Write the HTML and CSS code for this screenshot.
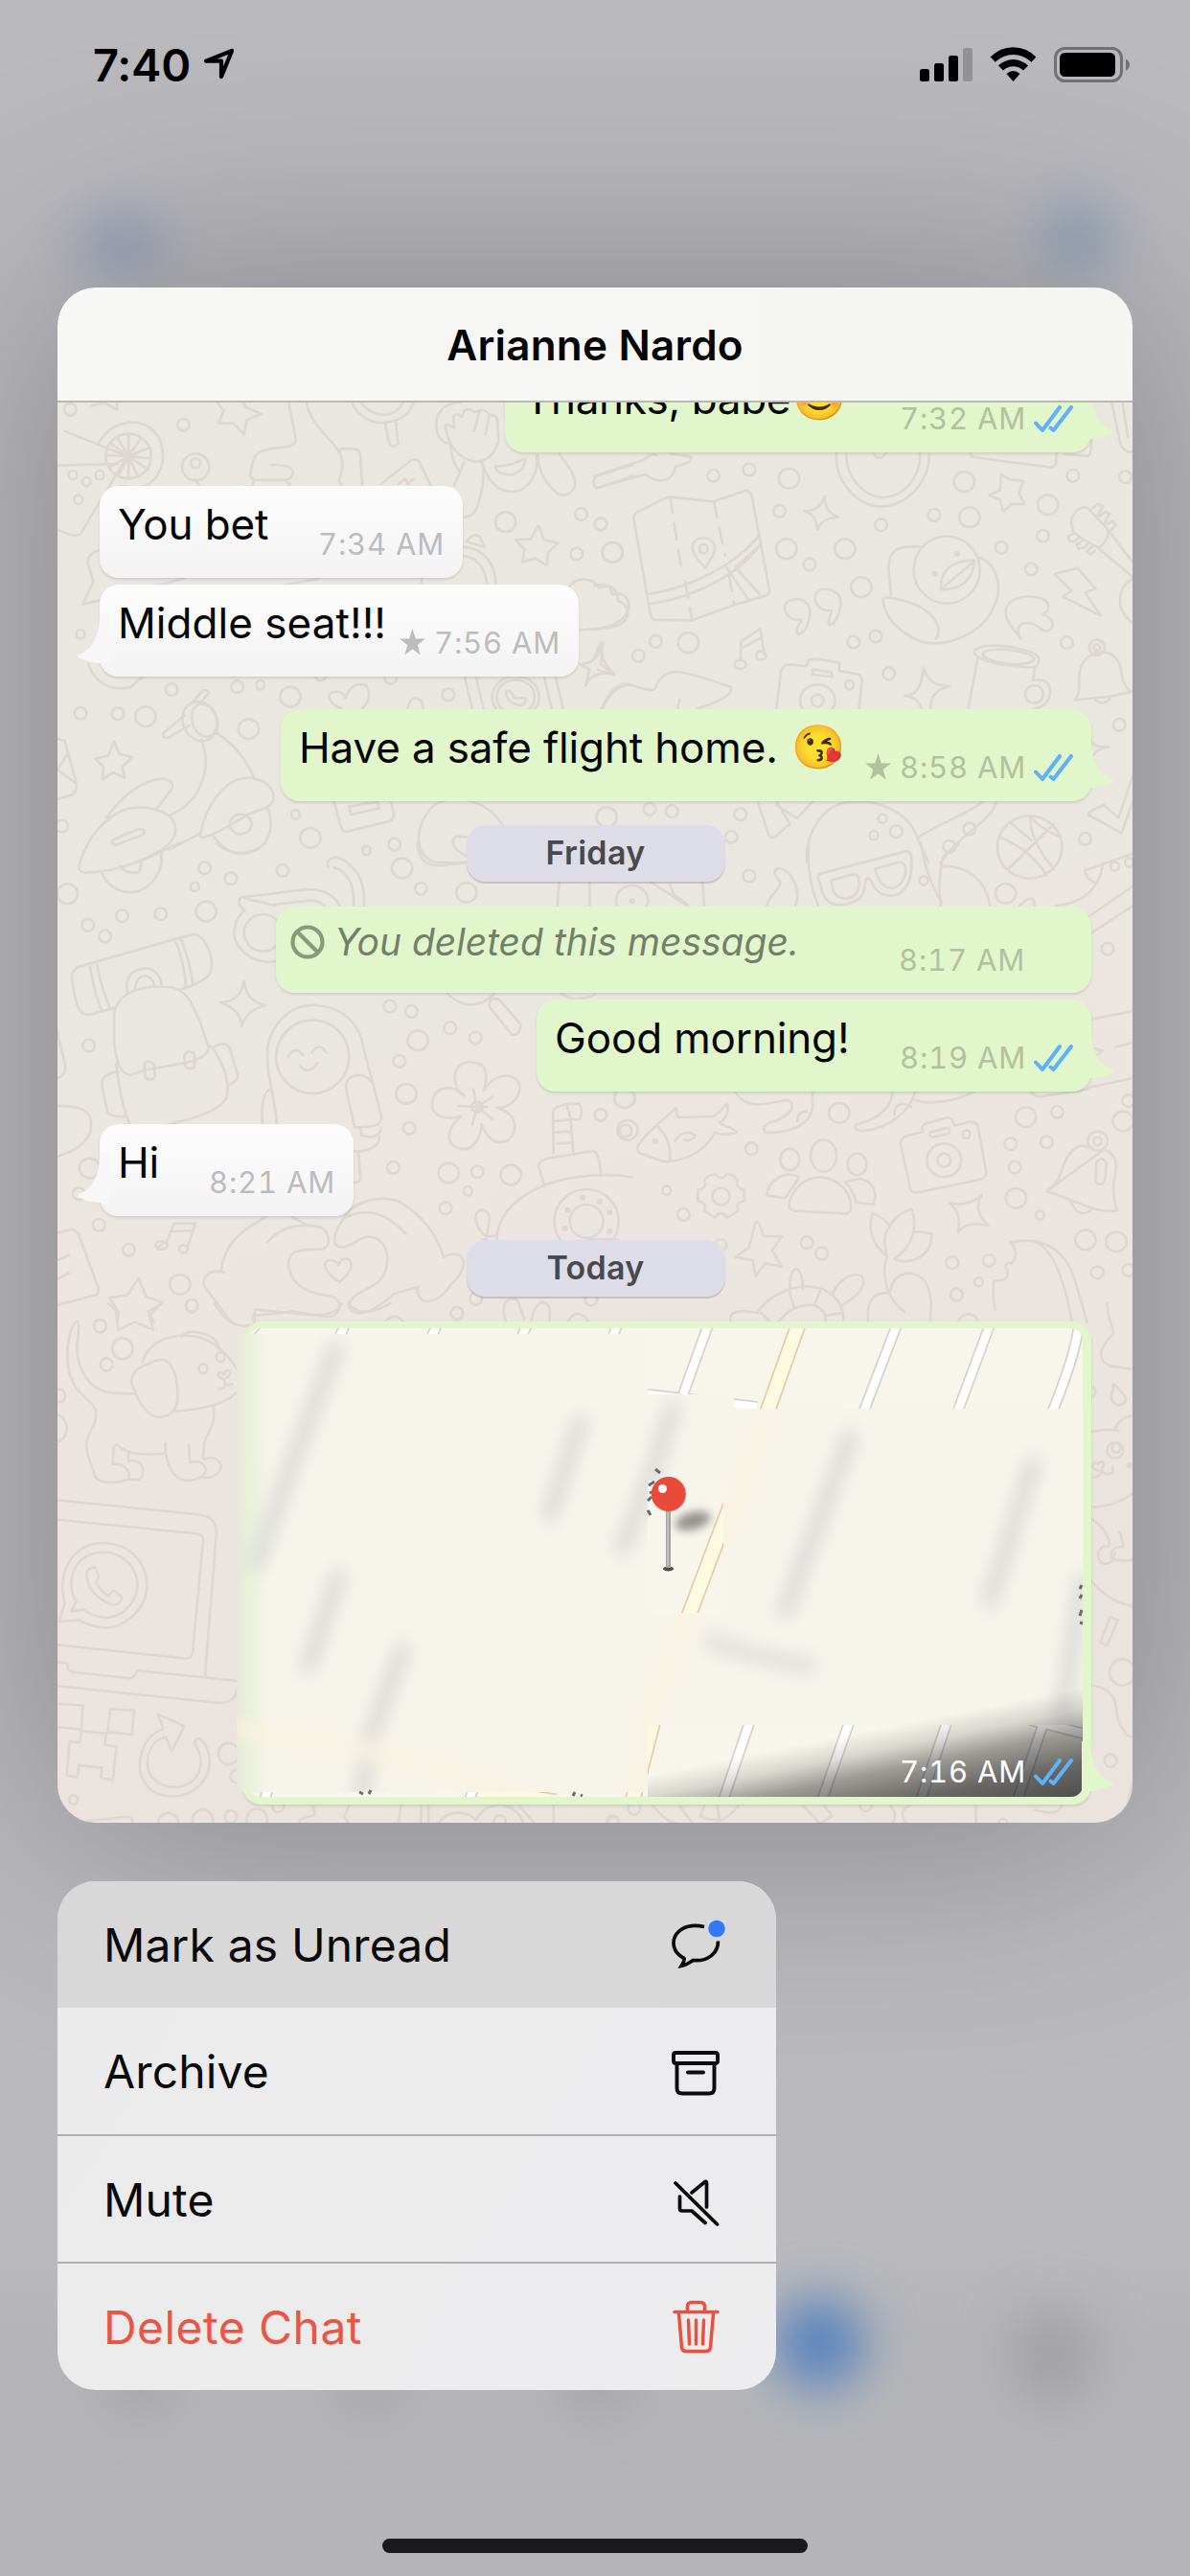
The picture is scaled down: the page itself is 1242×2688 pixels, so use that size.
FILE: index.html
```
<!DOCTYPE html>
<html lang="en">
<head>
<meta charset="utf-8">
<title>Chats</title>
<link rel="stylesheet" href="styles.css">
</head>
<body>
<svg class="defs" width="0" height="0" aria-hidden="true">
  <symbol id="read" viewBox="0 0 41 28"><path d="M2 18.5 9 26 27 2M17.5 23.5 20.500 26 39 2" fill="none" stroke="#5fb1fb" stroke-width="4" stroke-linecap="round" stroke-linejoin="round"/></symbol>
  <symbol id="star" viewBox="0 0 27 28"><path d="M13.500 0 16.800 10.400H27L18.700 17 21.700 27.500 13.500 21.200 5.300 27.500 8.300 17 0 10.400H10.200Z" fill="currentColor"/></symbol>
  <symbol id="tail" viewBox="0 0 34 54"><path d="M0 2H10C10 27 18 40 31.500 45Q34.500 47 31.500 48.500 20 53.500 9 54L0 54Z" fill="currentColor"/></symbol>
</svg>

<div class="screen">
  <div class="glow glow-edit"></div>
  <div class="glow glow-compose"></div>
  <div class="glow glow-tab1"></div>
  <div class="glow glow-tab2"></div>
  <div class="glow glow-tab3"></div>
  <div class="glow glow-tab4"></div>
  <div class="glow glow-tab5"></div>

  <header class="status">
    <div class="clock">
      <span class="time">7:40</span>
      <svg class="locate" width="36" height="36" viewBox="0 0 36 36"><path d="M31 5 20 32V15.700H4Z" fill="none" stroke="#000" stroke-width="4.200" stroke-linejoin="round"/></svg>
    </div>
    <svg class="system" width="222" height="40" viewBox="956 48 222 40">
      <rect x="958" y="72" width="10" height="13" rx="2.500"/><rect x="973" y="66" width="10" height="19" rx="2.500"/><rect x="988" y="58" width="10" height="27" rx="2.500"/><rect x="1003" y="50" width="10" height="35" rx="2.500" fill="#929294"/>
      <path d="M1031.700 59.500Q1042 49.300 1055.500 49.300T1079.400 59.500L1074.500 64.700Q1066 57 1055.500 57T1036.700 64.700ZM1040 68.500Q1047 62 1055.500 62T1071 68.500L1066 73.500Q1061 69.300 1055.500 69.300T1045 73.500ZM1048.500 77Q1052 74 1055.500 74T1062.500 77L1055.500 85Z"/>
      <rect x="1099.500" y="50.500" width="69" height="34" rx="10" fill="none" stroke="#717173" stroke-width="3"/><rect x="1104" y="55" width="58" height="25" rx="5.500"/><path d="M1173 61.500Q1177 64 1177 67.500T1173 74Z" fill="#717173"/>
    </svg>
  </header>

  <main class="preview">
    <h1 class="title">Arianne Nardo</h1>
    <section class="chat">
      <svg class="wallpaper" viewBox="60 420 1122 1482" aria-hidden="true">
        <g transform="translate(40 400) scale(.39541 .33333)">
          <path d="M70 150 235 228 112 470Q100 485 50 458M52 257 210 252M158 190C190 120 260 100 305 150C345 200 335 300 275 325Q240 330 215 320M238 228 238 165M238 228 272 170M238 228 295 200M238 228 297 235M238 228 290 270M238 228 262 290M238 228 238 298M238 228 210 290M238 228 190 262M238 228 184 225M238 228 192 190M238 228 208 170"/><ellipse cx="238" cy="228" rx="60" ry="70"/>
          <path d="M140 70 175 60 208 84 208 58M472 60 490 85 475 125 515 125 543 160 550 115 588 95 548 75 535 45M660 60 680 175Q680 195 650 200C600 205 575 210 568 240L558 290 570 303H650Q672 300 672 275 668 255 615 255M708 60C715 120 760 160 785 200 810 235 805 270 793 305L800 318M793 215 800 205 835 205Q850 210 850 225L855 318M570 303 565 318M650 303 665 318M828 60C840 100 880 130 920 122 960 115 985 90 990 60M852 60C870 90 890 98 915 98 940 95 955 80 962 60M915 122 927 190Q935 205 950 190L943 118M905 315 985 240Q1000 235 1005 245L1035 318M950 315 970 298 975 315 990 300M413 300 425 318"/>
          <path d="M1115 60C1060 60 1040 110 1055 160Q1065 185 1085 190M1075 140C1070 120 1090 135 1098 140L1095 105Q1105 90 1118 105L1125 85Q1140 75 1150 90L1165 85Q1180 80 1190 100 1210 95 1212 120L1215 180Q1200 240 1160 245C1110 240 1085 200 1075 140ZM1165 85 1150 150M1190 100 1180 160M1088 190C1090 240 1100 260 1112 275M1125 245 1098 318M1170 245C1180 280 1172 340 1160 380Q1150 420 1125 418M1175 260C1190 320 1230 350 1270 335 1300 320 1320 280 1315 225M1205 260Q1245 260 1285 235 1285 275 1250 285 1215 290 1205 260M1318 225C1320 280 1345 320 1370 345Q1400 360 1415 325C1425 290 1390 250 1375 220M1568 255 1475 290Q1455 310 1475 328L1568 290"/>
          <ellipse cx="415" cy="262" rx="36" ry="42"/><ellipse cx="415" cy="250" rx="12" ry="15"/>
          <path d="M1320 445 1335 490 1372 500 1345 530 1342 570 1312 548 1278 560 1283 520 1260 490 1300 487ZM1010 628C1015 560 1070 510 1125 512 1180 520 1208 570 1207 630M1120 540Q1175 545 1185 630M1130 495Q1150 465 1165 480L1178 512ZM1400 640C1420 600 1465 610 1480 640 1520 620 1530 660 1530 680 1570 700 1565 750 1510 765L1430 772M160 522Q130 535 130 560L145 620 118 692 215 665 385 610M560 650 740 612M1490 812Q1475 880 1430 880L1455 895 1445 945Q1460 900 1520 910L1485 880Z"/>
          <path d="M132 878C145 930 190 970 245 950L275 918M385 1040 330 1095Q325 1115 345 1108L400 1070M405 1000 435 960Q450 960 450 970L425 1003"/><ellipse cx="427" cy="1058" rx="46" ry="62" transform="rotate(-12 427 1058)"/><ellipse cx="438" cy="1055" rx="32" ry="52" transform="rotate(-12 438 1055)"/>
          <path d="M430 1115C460 1200 430 1310 350 1350M470 1095C520 1130 550 1180 570 1235M180 1360C215 1300 270 1240 330 1238Q360 1245 352 1270L310 1335M110 1500C130 1420 180 1350 240 1330 310 1320 365 1350 362 1400 358 1450 310 1470 260 1500M195 1430 265 1395Q285 1395 278 1412L205 1445Q190 1440 195 1430ZM428 1410C440 1330 490 1230 560 1235 630 1250 635 1310 600 1330 540 1345 500 1400 440 1420Q425 1425 428 1410M460 1412C480 1450 510 1478 545 1472 610 1460 625 1390 605 1328M345 1460 425 1410M325 1470V1500"/><ellipse cx="534" cy="1380" rx="29" ry="31"/>
          <path d="M200 1120 213 1160 248 1170 222 1200 228 1235 198 1218 170 1240 172 1200 150 1175 185 1165ZM50 1112 70 1120 100 1250Q105 1280 85 1290L50 1302M50 1210 80 1155M50 1210 98 1250M800 1018C760 1000 760 965 785 965Q805 965 810 985 830 930 865 945 885 980 855 1018M975 1018Q980 985 995 985 1018 990 1015 1018M1125 918 1145 1018M1155 918 1175 1018M1335 918 1355 1018M1365 918 1385 1018M1235 965Q1250 955 1255 985L1285 985Q1290 1005 1270 1008 1235 1000 1235 965M780 1308 800 1395Q810 1408 825 1400L930 1370Q940 1360 938 1345L930 1308M820 1325 895 1310 900 1330 825 1350ZM1490 1018C1510 960 1540 940 1568 945M1130 1500 1050 1500C990 1480 990 1390 1040 1325 1090 1280 1180 1300 1225 1382M1130 1480C1095 1460 1085 1430 1105 1418L1130 1420"/><ellipse cx="1260" cy="982" rx="62" ry="66"/><ellipse cx="1260" cy="982" rx="50" ry="54"/>
          <ellipse class="m" cx="84" cy="82"/><ellipse class="m" cx="383" cy="130"/><ellipse class="s" cx="91" cy="287"/><ellipse class="s" cx="162" cy="287"/><ellipse class="s" cx="127" cy="308"/><ellipse class="s" cx="106" cy="364"/><ellipse class="l" cx="1233" cy="434"/><ellipse class="m" cx="1433" cy="410"/><ellipse class="m" cx="1484" cy="441"/><ellipse class="m" cx="1421" cy="534"/><ellipse class="l" cx="1515" cy="529"/><ellipse class="s" cx="111" cy="785"/><ellipse class="m" cx="352" cy="959"/><ellipse class="m" cx="525" cy="950"/><ellipse class="s" cx="586" cy="944"/><ellipse class="l" cx="665" cy="981"/><ellipse class="m" cx="1082" cy="975"/><ellipse class="m" cx="111" cy="1033"/><ellipse class="m" cx="210" cy="1034"/><ellipse class="l" cx="283" cy="1043"/><ellipse class="l" cx="555" cy="1082"/><ellipse class="s" cx="679" cy="1349"/><ellipse class="l" cx="718" cy="1423"/><ellipse class="s" cx="866" cy="1463"/><ellipse class="m" cx="940" cy="1443"/><ellipse class="l" cx="1500" cy="1358"/><ellipse class="m" cx="62" cy="1386"/><ellipse class="m" cx="930" cy="922"/><ellipse class="m" cx="745" cy="912"/>
        </g>
        <g transform="translate(620 400) scale(.39668 .33333)">
          <path d="M0 290 130 240Q150 218 165 225M5 328 135 285Q175 320 205 290L215 260Q260 250 255 230L200 220M990 218 992 230 1200 263Q1212 262 1215 250L1217 218M1240 222 1300 228Q1310 222 1308 170M1362 60 1385 190Q1395 220 1417 213M1390 60 1405 170M638 218C630 300 690 388 760 386 830 380 885 300 882 218M664 218C660 290 710 357 760 357 820 355 860 290 857 218M735 218Q750 250 768 218"/>
          <path d="M120 400 195 355 315 370 400 335Q412 340 415 352L462 650Q460 662 450 665L365 695 258 742 160 740Q150 735 148 720L104 420Q105 405 120 400ZM142 660C260 640 380 560 435 475M150 690C270 670 390 590 437 505M345 570 405 675M372 575 435 660M372 575 437 508"/><path d="M200 355 232 600M240 620 258 742M315 370 345 540M355 600 368 690" stroke-dasharray="17 11"/><path d="M293 578C270 550 257 530 259 510 265 475 310 475 318 510 320 535 305 550 293 578Z"/><ellipse cx="288" cy="518" rx="11" ry="14"/>
          <path d="M607 352Q605 400 642 420 600 420 588 458 585 410 553 400 595 400 607 352ZM1072 285 1095 302 1130 305 1118 345 1132 378 1098 378 1077 402 1068 365 1040 350 1068 335ZM865 513C800 505 775 520 775 580L782 670M1010 545C1060 560 1075 640 1055 690 1030 780 930 830 860 808 800 780 765 730 760 680 760 660 800 675 840 690 890 715 920 760 900 800M912 645C910 590 940 550 1000 555 1000 610 965 650 912 645ZM912 645 1000 557M1212 597 1272 578 1320 643 1292 655 1333 727 1233 667 1257 650ZM1123 800C1105 770 1070 730 1088 695 1110 655 1180 665 1192 685 1200 710 1190 720 1180 722 1220 740 1208 775 1190 775 1170 775 1170 750 1140 750 1115 752 1110 770 1123 800ZM537 787C525 765 545 755 545 740 500 745 490 690 515 680 560 665 575 700 565 740 560 770 550 780 537 787ZM620 757C610 740 625 725 625 712 575 715 570 650 600 645 640 640 655 670 647 705 640 740 630 755 620 757Z"/><ellipse cx="928" cy="584" rx="87" ry="105"/>
          <path d="M1255 430C1260 400 1285 380 1300 392L1350 455Q1360 480 1330 515 1300 500 1260 465ZM1350 455 1417 560M1325 515 1417 605M1417 612C1375 640 1370 710 1417 750M1308 395 1325 378 1340 385 1325 412M1330 415 1345 402 1357 408 1342 438M1350 440 1365 430 1372 445 1358 462M1262 470 1247 480 1252 495 1265 495 1275 482M1285 492 1270 505 1275 518 1290 515 1298 502M1310 512 1297 525 1305 535 1318 525"/>
          <path d="M0 632Q45 620 47 660 90 650 92 700 80 760 0 770M0 860 18 812Q15 870 52 910 20 905 10 895M20 1018C40 960 70 930 100 945 160 970 160 960 165 940C200 880 230 900 360 950 370 980 300 1010 270 1018M225 990 220 1018M385 870 387 808 437 768 448 850M387 830 437 798M480 1018 492 900Q500 880 515 880L555 885Q565 880 565 865 590 860 645 875V900L690 910Q705 915 705 930L697 1018M575 895 625 905 627 918 575 912ZM867 890Q880 950 937 948 885 960 885 1018M867 890Q860 980 818 978 855 985 862 1018M1000 840C1020 800 1160 830 1170 860 1170 900 1150 890 1110 885 1050 880 1000 860 1000 840ZM1010 855 985 1018M1160 890 1155 930Q1200 920 1200 970 1195 1010 1160 1018M1265 992C1285 960 1270 930 1280 890 1300 830 1370 820 1385 890 1390 930 1400 960 1415 965L1360 980ZM1320 992Q1340 1015 1360 983"/><ellipse cx="1090" cy="856" rx="68" ry="22" transform="rotate(7 1090 856)"/><ellipse cx="385" cy="880" rx="15" ry="14"/><ellipse cx="440" cy="852" rx="13" ry="14"/><ellipse cx="588" cy="993" rx="46" ry="50"/><ellipse class="m" cx="588" cy="993"/><ellipse cx="1158" cy="973" rx="24" ry="28"/><ellipse cx="1323" cy="827" rx="20" ry="25"/><ellipse cx="1323" cy="827" rx="8" ry="10"/>
          <path d="M430 1308 460 1415Q470 1430 480 1415L515 1380 480 1308M480 1320 535 1362 575 1308M560 1500C555 1420 590 1340 650 1315 750 1290 830 1350 850 1420L880 1500M855 1420C920 1370 980 1350 1025 1308M912 1500C960 1410 1050 1370 1058 1308M1340 1320 1305 1340 1300 1350 1388 1408 1417 1310M1340 1320 1380 1360 1417 1230M1305 1115Q1310 1140 1355 1138 1315 1145 1310 1175"/><ellipse cx="1146" cy="1452" rx="85" ry="98"/><path d="M1146 1355Q1180 1400 1228 1420M1146 1355Q1150 1440 1210 1520M1095 1375 1150 1430M1210 1380 1090 1520M1065 1420Q1150 1460 1190 1540"/>
          <ellipse class="m" cx="314" cy="289"/><ellipse class="m" cx="408" cy="270"/><ellipse class="l" cx="513" cy="298"/><ellipse class="m" cx="18" cy="441"/><ellipse class="l" cx="49" cy="529"/><ellipse class="m" cx="488" cy="400"/><ellipse class="l" cx="506" cy="518"/><ellipse class="m" cx="567" cy="567"/><ellipse class="l" cx="660" cy="518"/><ellipse class="l" cx="703" cy="638"/><ellipse class="m" cx="755" cy="443"/><ellipse class="l" cx="974" cy="308"/><ellipse class="m" cx="895" cy="412"/><ellipse class="l" cx="988" cy="419"/><ellipse class="l" cx="1194" cy="380"/><ellipse class="m" cx="1260" cy="289"/><ellipse class="m" cx="1398" cy="293"/><ellipse class="m" cx="1181" cy="478"/><ellipse class="m" cx="1072" cy="514"/><ellipse class="m" cx="1150" cy="582"/><ellipse class="m" cx="117" cy="853"/><ellipse class="m" cx="162" cy="808"/><ellipse class="l" cx="248" cy="812"/><ellipse class="m" cx="683" cy="810"/><ellipse class="m" cx="741" cy="792"/><ellipse class="m" cx="776" cy="909"/><ellipse class="m" cx="1244" cy="812"/><ellipse class="m" cx="1382" cy="1069"/><ellipse class="l" cx="33" cy="1358"/><ellipse class="m" cx="146" cy="1333"/><ellipse class="m" cx="205" cy="1340"/><ellipse class="m" cx="385" cy="1349"/><ellipse class="m" cx="361" cy="1420"/><ellipse class="s" cx="759" cy="1363"/><ellipse class="m" cx="795" cy="1403"/><ellipse class="s" cx="736" cy="1415"/><ellipse class="m" cx="1292" cy="1426"/><ellipse class="s" cx="672" cy="944"/><ellipse class="m" cx="988" cy="1395"/><ellipse class="m" cx="935" cy="1450"/><ellipse class="dot" cx="955" cy="533"/><ellipse class="dot" cx="897" cy="596"/>
        </g>
        <g transform="translate(40 880) scale(.39541 .33333)">
          <path d="M110 60Q100 90 125 92C220 90 300 40 370 0M168 92C180 130 210 155 250 153 300 145 335 80 322 30M215 70Q235 100 265 90 275 70 270 60M470 0Q530 60 600 0M1000 0C1005 50 1020 70 1060 70L1130 60M765 75C755 45 785 35 810 55 850 90 862 130 860 195M780 75C820 90 835 130 832 195M625 370C560 380 510 320 518 270 520 240 530 225 545 210 520 190 530 165 545 168L700 145C750 140 780 160 795 195M545 172 625 195M620 192 720 178Q740 180 755 195"/><ellipse cx="593" cy="280" rx="50" ry="58"/>
          <path d="M110 385 400 287Q425 280 440 310 465 360 455 400 450 430 375 458M110 385C80 400 90 430 95 470 105 530 115 540 140 535L200 515M137 385Q145 460 168 525M155 380Q165 450 190 517M360 300Q385 370 390 450M375 295Q400 370 408 440M235 465C225 400 270 385 300 395Q325 415 325 445M255 455Q258 415 285 415 305 425 305 445M200 530C215 450 300 445 350 450 395 460 410 510 430 570L450 640C445 700 300 690 245 725 215 725 205 680 200 620ZM455 635C500 700 505 770 495 800 470 850 370 870 320 888L245 885C215 820 210 720 205 690M280 695Q285 675 305 690L308 730Q295 750 282 730ZM385 665Q395 640 412 660L413 700Q395 715 388 695ZM462 640Q490 615 505 640L525 720Q528 745 505 755M212 715Q165 720 168 760L182 840Q190 858 230 855"/>
          <path d="M543 430Q548 495 600 507 550 520 537 573 535 520 480 498 535 495 543 430ZM630 880C625 800 600 720 605 640 615 560 670 500 735 507 810 515 850 570 858 640L905 850Q908 880 885 885L835 890C830 850 815 800 812 760 815 720 860 715 878 745M660 668Q675 630 698 662M722 655Q742 620 760 655M690 695Q712 730 737 688M592 880Q585 780 615 768M850 890 853 915Q900 930 905 890M900 920Q900 960 835 965M845 965 850 1050Q848 1062 832 1062"/><ellipse cx="724" cy="668" rx="96" ry="115"/>
          <path d="M1110 780C1080 700 1120 680 1150 686 1180 690 1190 720 1175 775 1210 710 1260 720 1270 755 1275 800 1240 830 1210 827 1270 850 1265 900 1240 930 1200 950 1180 910 1170 880 1165 940 1140 965 1110 955 1070 940 1080 890 1115 855 1070 870 1035 850 1040 810 1050 750 1100 760 1125 790ZM1158 825 1148 770M1158 825 1200 793M1158 825 1198 862M1158 825 1145 882M1158 825 1110 822M1158 825 1185 825"/><ellipse cx="1158" cy="825" rx="14" ry="17"/>
          <path d="M1080 470Q1140 540 1205 470M1190 510Q1190 480 1215 488L1272 565Q1275 600 1250 600ZM1380 470Q1400 490 1435 485T1468 470M1360 970 1358 840Q1365 815 1425 815 1440 830 1430 862Q1420 868 1405 862L1412 965M1362 870 1405 865M1365 905 1408 902M1368 940 1412 937M1395 820 1405 860M1337 1077 1320 1010Q1325 990 1350 985L1465 963Q1482 970 1485 1040M1210 1240C1215 1120 1330 1050 1460 1040 1520 1035 1568 1045 1568 1045M1183 1232C1150 1200 1145 1150 1170 1148 1200 1150 1190 1190 1183 1232ZM1183 1232 1210 1228M1170 1240H1183M1450 1240H1530"/><ellipse cx="1447" cy="1183" rx="85" ry="100"/><ellipse cx="1447" cy="1183" rx="44" ry="52"/>
          <path d="M50 822C130 820 145 850 138 900 125 950 80 970 50 980M50 590 72 700Q70 730 50 735M315 1265 340 1245 358 1190H415L393 1265M350 1215 408 1212M50 1220 90 1208 105 1220 158 1390Q160 1410 150 1415L50 1445M50 1305 80 1290M50 1365 80 1345M265 1360 285 1420 327 1437 295 1475 305 1500M265 1360 235 1415 188 1422 212 1470 208 1500M482 1340C490 1250 540 1210 600 1170M490 1342C440 1330 430 1370 440 1390L510 1500M605 1248C640 1200 690 1190 740 1200 770 1210 775 1260 750 1270 710 1275 660 1260 660 1320 670 1400 730 1410 780 1420 805 1440 800 1490 750 1480L670 1465 575 1478Q570 1462 565 1490M670 1170 710 1195M805 1175C780 1220 770 1260 800 1265 840 1260 850 1220 890 1235 930 1260 930 1330 900 1370 870 1400 820 1410 820 1450 840 1500 900 1450 940 1410L1005 1388M805 1175C830 1120 900 1100 950 1120 1010 1160 1050 1220 1070 1295 1130 1260 1140 1330 1090 1380 1050 1450 1000 1450 1000 1390M805 1175Q890 1120 970 1222M795 1373C750 1340 745 1300 775 1305Q790 1310 792 1320 800 1295 820 1302 840 1330 795 1373ZM1235 1500C1215 1430 1245 1420 1265 1430L1283 1490M1300 1500C1310 1430 1340 1420 1350 1460V1500M1375 120 1370 195M1455 120V195"/><ellipse cx="325" cy="1258" rx="16" ry="13"/><ellipse cx="383" cy="1270" rx="12" ry="12"/>
          <ellipse class="l" cx="77" cy="158"/><ellipse class="m" cx="439" cy="77"/><ellipse class="m" cx="508" cy="110"/><ellipse class="s" cx="413" cy="136"/><ellipse class="m" cx="645" cy="85"/><ellipse class="l" cx="960" cy="78"/><ellipse class="m" cx="1010" cy="142"/><ellipse class="l" cx="1130" cy="154"/><ellipse class="m" cx="131" cy="256"/><ellipse class="m" cx="221" cy="227"/><ellipse class="m" cx="323" cy="221"/><ellipse class="l" cx="443" cy="213"/><ellipse class="m" cx="176" cy="291"/><ellipse class="m" cx="133" cy="633"/><ellipse class="m" cx="928" cy="510"/><ellipse class="m" cx="985" cy="526"/><ellipse class="m" cx="1087" cy="578"/><ellipse class="l" cx="1002" cy="617"/><ellipse class="m" cx="1154" cy="609"/><ellipse class="m" cx="953" cy="682"/><ellipse class="l" cx="971" cy="784"/><ellipse class="m" cx="979" cy="892"/><ellipse class="l" cx="1083" cy="1032"/><ellipse class="m" cx="1159" cy="1028"/><ellipse class="m" cx="937" cy="1015"/><ellipse class="l" cx="1247" cy="1038"/><ellipse class="s" cx="1134" cy="1088"/><ellipse class="m" cx="1075" cy="1142"/><ellipse class="m" cx="1484" cy="850"/><ellipse class="l" cx="1547" cy="797"/><ellipse class="m" cx="1550" cy="900"/><ellipse class="l" cx="135" cy="1017"/><ellipse class="m" cx="107" cy="1097"/><ellipse class="m" cx="160" cy="1195"/><ellipse class="m" cx="239" cy="1273"/><ellipse class="l" cx="374" cy="1381"/><ellipse class="m" cx="405" cy="1447"/><ellipse class="m" cx="1105" cy="1471"/><ellipse class="m" cx="1155" cy="1426"/><ellipse class="m" cx="1459" cy="1428"/><ellipse class="s" cx="866" cy="22"/><ellipse class="dot" cx="1437" cy="1109"/><ellipse class="dot" cx="1482" cy="1121"/><ellipse class="dot" cx="1508" cy="1155"/><ellipse class="dot" cx="1397" cy="1148"/><ellipse class="dot" cx="1390" cy="1206"/><ellipse class="dot" cx="1508" cy="1214"/>
        </g>
        <g transform="translate(620 880) scale(.39668 .33333)">
          <path d="M590 115Q585 95 605 92L820 25Q835 20 835 50 840 130 800 160 760 175 735 135 725 100 715 112L710 150C700 190 640 205 615 180 595 160 600 130 590 115ZM625 115 680 97Q700 95 697 130 695 170 660 173 625 170 625 115ZM740 80 800 60Q820 55 820 90 810 140 780 140 750 135 740 80ZM565 0C560 80 570 140 590 195M860 0C870 80 895 150 915 185M912 195C905 130 910 60 925 30Q960 10 960 0M918 72C980 70 1030 110 1042 195M530 195C545 140 520 90 490 78 470 80 470 95 490 120 490 150 460 160 455 195M285 120 290 195M150 122 245 195M200 130 210 160 245 190M1292 85 1417 32M1292 85C1290 110 1320 125 1320 125M1340 62C1330 130 1300 185 1215 195M1300 230 1417 135M1310 280 1417 195M1120 195Q1160 150 1158 195M1310 550 1417 525M1310 640 1338 650 1315 670M1370 637 1417 625M1300 765 1417 735"/>
          <path d="M115 950C130 910 190 860 215 828 220 835 215 860 225 858L310 855C330 850 335 830 350 815 355 840 350 860 330 875 350 890 375 895 375 905 350 915 330 910 318 905 290 970 230 1000 180 995L120 970Q112 960 115 950ZM168 888Q205 930 200 990M213 932Q235 890 268 915 255 935 237 928M370 778C410 850 480 800 510 805 540 820 510 860 460 875Q440 890 450 905C530 910 570 870 575 830V778M785 778C780 850 720 870 690 880 680 890 690 900 710 900 780 890 830 840 845 778M845 805Q920 825 1000 778M790 850Q790 815 815 815L835 825M535 870Q535 840 560 838M1150 778Q1160 800 1190 790L1300 770"/>
          <path d="M318 1035Q335 1060 350 1035 365 1035 378 1055 370 1080 395 1085V1120Q370 1125 380 1150L350 1172Q335 1145 318 1172L290 1150Q300 1125 273 1120V1085Q300 1080 290 1055 305 1035 318 1035ZM513 1140C515 1090 550 1045 595 1045 650 1050 680 1100 675 1150L665 1160 525 1150ZM503 1110 455 1103C455 1060 500 1020 540 1045ZM690 1125 735 1130C745 1100 740 1060 700 1050L660 1060Q680 1080 690 1125Z"/><ellipse cx="334" cy="1105" rx="23" ry="27"/><ellipse cx="604" cy="978" rx="34" ry="50"/><ellipse cx="515" cy="990" rx="25" ry="34"/><ellipse cx="692" cy="1005" rx="25" ry="34"/>
          <path d="M820 917 865 903Q858 880 880 875L930 858Q945 858 948 885L985 872Q1005 870 1010 885L1032 1030Q1030 1050 1015 1053L850 1093Q835 1095 832 1080L807 945Q805 925 820 917ZM885 905 930 890Q942 900 930 910L890 920Q880 915 885 905ZM1190 1090C1240 1050 1220 1010 1260 960 1290 930 1300 960 1300 950M1342 958C1385 980 1375 1020 1367 1060 1365 1110 1370 1130 1377 1150 1310 1160 1260 1110 1190 1090ZM1255 1125Q1275 1175 1308 1148M1322 1000Q1335 975 1348 1000L1345 1050Q1335 1080 1320 1060Z"/><ellipse cx="921" cy="992" rx="45" ry="52"/><ellipse cx="921" cy="992" rx="17" ry="21"/><ellipse cx="979" cy="911" rx="10" ry="13"/><ellipse cx="1325" cy="932" rx="26" ry="30"/><ellipse cx="1325" cy="932" rx="10" ry="13"/>
          <path d="M935 1125Q980 1140 1020 1100 995 1150 1037 1197 980 1180 957 1218 970 1160 935 1125ZM425 1185Q435 1180 445 1230L495 1230 468 1275 495 1325 450 1315 425 1355 418 1305 372 1295 408 1265ZM770 1290C730 1260 720 1200 733 1158 760 1170 775 1190 778 1200 790 1170 810 1155 835 1145 850 1190 845 1260 790 1300M770 1290C760 1240 765 1220 778 1200M843 1215Q865 1215 888 1222C890 1280 850 1320 795 1305M770 1295C755 1350 770 1430 818 1467M780 1400C790 1340 840 1330 870 1370 895 1420 885 1470 885 1500M775 1408C730 1400 715 1450 722 1500M515 1395Q515 1330 535 1332 550 1350 550 1395M628 1410C640 1370 680 1340 705 1355 720 1390 690 1420 650 1448M360 1500C350 1460 390 1460 430 1470 460 1410 540 1370 600 1395 650 1420 660 1470 655 1500M515 1405 525 1450M595 1398 580 1445M440 1470 465 1500M485 1500Q520 1440 580 1445 610 1460 610 1500M610 1478 655 1470M1095 1250C1170 1230 1230 1260 1260 1350 1280 1420 1290 1470 1297 1500M1160 1247C1210 1270 1240 1380 1258 1500M1095 1250Q1120 1280 1100 1315 1080 1310 1085 1330 1100 1370 1052 1370 1048 1420 1055 1460 1058 1500M1100 1405 1127 1415 1100 1432M1195 1380 1170 1400 1198 1410M1130 1490Q1160 1475 1195 1470M1155 1485V1500M1180 1475V1495M1355 1500C1340 1440 1350 1410 1375 1430L1417 1440M90 1420 88 1470Q90 1485 110 1485L240 1498 255 1465 288 1488 292 1420M0 1040C80 1040 160 1080 163 1160Q160 1210 150 1240M0 960Q15 985 15 1040"/>
          <ellipse cx="100" cy="180" rx="42" ry="48"/><ellipse class="dot" cx="100" cy="181"/>
          <ellipse class="m" cx="408" cy="102"/><ellipse class="s" cx="867" cy="117"/><ellipse class="l" cx="1083" cy="157"/><ellipse class="s" cx="1370" cy="72"/><ellipse class="s" cx="1408" cy="60"/><ellipse class="m" cx="1351" cy="330"/><ellipse class="l" cx="81" cy="797"/><ellipse class="m" cx="18" cy="850"/><ellipse class="l" cx="88" cy="898"/><ellipse class="l" cx="645" cy="844"/><ellipse class="m" cx="414" cy="956"/><ellipse class="s" cx="191" cy="1087"/><ellipse class="m" cx="235" cy="1162"/><ellipse class="l" cx="1136" cy="857"/><ellipse class="m" cx="1219" cy="841"/><ellipse class="m" cx="1096" cy="941"/><ellipse class="m" cx="1191" cy="935"/><ellipse class="m" cx="1107" cy="1014"/><ellipse class="l" cx="1110" cy="1111"/><ellipse class="s" cx="1173" cy="1164"/><ellipse class="l" cx="1392" cy="870"/><ellipse class="m" cx="1406" cy="806"/><ellipse class="l" cx="1293" cy="1241"/><ellipse class="l" cx="1374" cy="1247"/><ellipse class="m" cx="560" cy="1250"/><ellipse class="m" cx="599" cy="1284"/><ellipse class="m" cx="942" cy="1313"/><ellipse class="m" cx="1039" cy="1306"/><ellipse class="s" cx="1012" cy="1373"/><ellipse class="m" cx="954" cy="1413"/><ellipse class="m" cx="1324" cy="1343"/><ellipse class="m" cx="1406" cy="1336"/><ellipse class="m" cx="333" cy="1258"/><ellipse class="dot" cx="161" cy="932"/>
        </g>
        <g transform="translate(40 1360) scale(.39541 .35714)">
          <path d="M205 22 210 78 255 55 303 77 290 22 325 3M185 0 205 22M465 0C490 50 530 80 570 60L572 18 680 30Q790 45 800 0M820 0Q850 50 930 0M103 52C85 60 70 130 80 190 90 270 150 280 152 320 155 360 130 370 127 410 125 440 140 470 150 505 160 530 210 525 235 515M103 52Q110 55 102 120C100 200 140 260 200 262L255 265M290 178C250 190 240 220 250 245 270 300 290 335 325 332 370 325 370 280 367 245 362 180 335 160 320 165 300 170 295 175 290 178M275 172C290 110 350 90 400 95 460 100 500 150 523 190M378 98Q390 75 430 87T475 123M362 315C440 310 500 290 523 260M462 298C470 370 440 380 438 410L435 450M197 470 198 425Q205 405 215 420 250 450 337 438M335 408C335 460 350 520 400 518 470 505 440 450 400 465L397 415M438 455C480 440 495 480 470 500Q455 512 435 508M197 470C230 465 250 500 235 515M240 460C280 455 285 500 265 515H235M238 435V462M475 210Q475 195 490 207 495 190 508 200 505 215 490 222 478 220 475 210ZM490 222 495 240Q485 255 476 248M497 240 512 236"/>
          <path d="M50 575 430 618Q470 625 470 670L440 1090M50 632 420 673Q437 678 435 692L407 1020Q403 1040 390 1038L50 998M50 1048 76 1052 78 1070 92 1078 240 1095Q255 1095 260 1073L524 1103M50 1118 480 1168Q520 1165 522 1132M55 930 70 875C50 800 80 700 175 700 250 705 287 765 287 825 285 900 220 950 175 948 150 945 120 935 108 926ZM87 900 100 870C75 830 80 730 175 727 230 730 262 780 262 825 255 890 210 920 175 918 150 915 140 910 120 895ZM128 790Q130 770 150 772L160 800Q150 810 155 820 165 840 185 855 195 840 200 840L220 857Q220 880 200 882C160 870 125 830 128 790ZM55 1170 118 1175 113 1245 50 1238M190 1185 253 1190 247 1260 183 1252ZM113 1250 180 1257 175 1290 206 1295 197 1392 165 1388 168 1357 107 1350 103 1385 75 1380 82 1280 110 1283ZM315 1200 385 1235 352 1308 337 1267C290 1275 275 1350 300 1385 340 1430 400 1420 425 1370 435 1330 425 1305 412 1285Q415 1265 430 1275C460 1310 460 1370 425 1410 380 1455 310 1450 280 1400 250 1340 280 1260 330 1243ZM130 1512 240 1500Q250 1505 250 1520M50 1512 90 1520"/>
          <path d="M690 1520 690 1508 730 1495 725 1468M820 1468 808 1500 820 1520M958 1468 950 1520M1010 1468V1520M1030 1520V1468M1055 1520C1080 1480 1130 1480 1155 1510 1180 1460 1220 1460 1250 1470M1270 1468 1310 1520M1360 1468V1520M1230 1468Q1270 1480 1280 1520"/>
          <ellipse class="m" cx="163" cy="66"/><ellipse class="l" cx="222" cy="132"/><ellipse class="m" cx="180" cy="179"/><ellipse class="s" cx="435" cy="191"/><ellipse class="s" cx="481" cy="157"/><ellipse class="m" cx="55" cy="270"/><ellipse cx="45" cy="365" rx="30" ry="40"/><ellipse class="l" cx="502" cy="1316"/><ellipse class="m" cx="523" cy="1382"/><ellipse class="s" cx="93" cy="1450"/><ellipse class="m" cx="508" cy="1500"/><ellipse class="l" cx="434" cy="1510"/><ellipse class="l" cx="577" cy="1508"/><ellipse class="l" cx="343" cy="1520"/><ellipse class="m" cx="633" cy="1468"/><ellipse class="m" cx="1105" cy="30"/><ellipse class="m" cx="405" cy="8"/><ellipse class="m" cx="1218" cy="1515"/><ellipse class="m" cx="1516" cy="1515"/><ellipse class="l" cx="940" cy="70"/><ellipse class="l" cx="1425" cy="62"/>
        </g>
        <g transform="translate(620 1360) scale(.39668 .35714)">
          <path d="M1350 0C1350 50 1370 70 1365 90 1340 120 1330 140 1335 160 1345 190 1380 185 1417 192M1367 235Q1400 270 1400 280 1395 298 1380 297 1358 292 1362 270ZM1308 375Q1350 365 1380 372M1370 370Q1380 335 1417 328M1308 595Q1370 595 1417 555M1312 475Q1315 460 1325 470 1335 455 1342 468L1335 490Q1315 490 1312 475ZM1335 490Q1330 510 1312 508M1337 488Q1345 505 1365 495V475M1308 630C1340 650 1360 690 1355 710 1320 705 1320 750 1340 760 1365 765 1370 740 1370 730M1382 668Q1395 700 1390 712 1355 710 1362 745 1380 755 1417 750M1308 810C1330 840 1370 880 1417 884M1358 917 1378 925 1350 1000 1332 992ZM1308 1115C1400 1130 1360 1210 1390 1240Q1400 1265 1417 1268M155 1468C180 1500 200 1520 220 1520M225 1468 260 1520M380 1468C360 1500 330 1510 320 1520M290 1468 280 1500Q300 1510 330 1508L325 1468M550 1468 595 1520 627 1498 605 1468M780 1468Q800 1490 785 1520M830 1468Q800 1480 820 1520M1005 1468V1520M1160 1480Q1220 1500 1230 1468M1417 1400Q1400 1450 1410 1500"/>
          <ellipse cx="1371" cy="430" rx="21" ry="23"/><ellipse class="s" cx="1374" cy="422"/><ellipse class="dot" cx="1408" cy="473"/><ellipse cx="1390" cy="1078" rx="34" ry="38"/><ellipse class="m" cx="1359" cy="1336"/><ellipse class="m" cx="106" cy="1475"/><ellipse class="m" cx="50" cy="1520"/><ellipse class="m" cx="715" cy="1465"/><ellipse class="s" cx="1076" cy="1520"/><ellipse class="l" cx="985" cy="62"/><ellipse class="s" cx="1308" cy="258"/>
        </g>
      </svg>

      <div class="message out after-none w-thanks"><p class="text">Thanks, babe</p><span class="emoji">😊</span><span class="meta">7:32 AM<svg class="ticks"><use href="#read"/></svg></span><svg class="tail"><use href="#tail"/></svg></div>
      <div class="message in group w-bet"><p class="text">You bet</p><span class="meta">7:34 AM</span></div>
      <div class="message in w-seat"><p class="text">Middle seat!!!</p><span class="meta"><svg class="starred"><use href="#star"/></svg>7:56 AM</span><svg class="tail"><use href="#tail"/></svg></div>
      <div class="message out group w-flight"><p class="text">Have a safe flight home.</p><span class="emoji spaced">😘</span><span class="meta"><svg class="starred"><use href="#star"/></svg>8:58 AM<svg class="ticks"><use href="#read"/></svg></span><svg class="tail"><use href="#tail"/></svg></div>
      <div class="day">Friday</div>
      <div class="message out deleted"><svg class="ban" viewBox="0 0 36 36"><circle cx="18" cy="18" r="15.500"/><path d="M7 7 29 29"/></svg><p class="text">You deleted this message.</p><span class="meta">8:17 AM</span></div>
      <div class="message out w-morning"><p class="text">Good morning!</p><span class="meta">8:19 AM<svg class="ticks"><use href="#read"/></svg></span><svg class="tail"><use href="#tail"/></svg></div>
      <div class="message in group w-hi"><p class="text">Hi</p><span class="meta">8:21 AM</span><svg class="tail"><use href="#tail"/></svg></div>
      <div class="day">Today</div>
      <div class="message out location">
        <svg class="map" viewBox="260 1386 870 489">
          <defs>
            <clipPath id="frame"><rect x="260" y="1386" width="870" height="489" rx="12"/></clipPath>
            <clipPath id="haze"><path d="M247 1392H676V1455H766V1470H1130V1800H676V1870H247ZM676 1545V1683H755V1545Z" clip-rule="evenodd"/></clipPath>
            <filter id="soft" x="-30%" y="-30%" width="160%" height="160%"><feGaussianBlur stdDeviation="9"/></filter>
            <filter id="pinblur" x="-50%" y="-50%" width="200%" height="200%"><feGaussianBlur stdDeviation="5"/></filter>
            <linearGradient id="edge"><stop offset="0" stop-color="#e9e6d9"/><stop offset=".35" stop-color="#e8f1d8"/><stop offset="1" stop-color="#f6f4ec"/></linearGradient>
            <linearGradient id="shade" gradientUnits="userSpaceOnUse" x1="1130" y1="1875" x2="1107.600" y2="1765"><stop offset="0" stop-color="#000" stop-opacity=".68"/><stop offset=".3" stop-color="#000" stop-opacity=".58"/><stop offset=".6" stop-color="#000" stop-opacity=".37"/><stop offset=".8" stop-color="#000" stop-opacity=".13"/><stop offset="1" stop-color="#000" stop-opacity="0"/></linearGradient>
          </defs>
          <g clip-path="url(#frame)">
            <rect x="260" y="1386" width="870" height="489" fill="#f8f5ec"/>
            <g class="casing"><path d="M740 1380 713 1455M937 1380 901 1474M1034 1380 999 1474M1126 1380Q1124 1410 1098 1474M645 1380 640 1394M361 1380 355 1394M457 1380 451 1394M551 1380 545 1394M260 1390 270 1380M782 1798 755 1878M886 1798 858 1878M988 1798 961 1878M1089 1798 1062 1878M1075 1795 1135 1810M676 1455 790 1468M1120 1585 1135 1594M490 1878 494 1866M276 1878 280 1866"/></g>
            <g class="road"><path d="M740 1380 713 1455M937 1380 901 1474M1034 1380 999 1474M1126 1380Q1124 1410 1098 1474M645 1380 640 1394M361 1380 355 1394M457 1380 451 1394M551 1380 545 1394M260 1390 270 1380M782 1798 755 1878M886 1798 858 1878M988 1798 961 1878M1089 1798 1062 1878M1075 1795 1135 1810M676 1455 790 1468M1120 1585 1135 1594M490 1878 494 1866M276 1878 280 1866"/></g>
            <path d="M834 1380 802 1470 755 1590 720 1683 690 1765 660 1880M500 1868 580 1880" fill="none" stroke="#e8caa6" stroke-width="17"/>
            <path d="M834 1380 802 1470 755 1590 720 1683 690 1765 660 1880M500 1868 580 1880" fill="none" stroke="#fcfae0" stroke-width="13.500"/>
          </g>
          <g clip-path="url(#haze)">
            <rect x="247" y="1392" width="883" height="478" fill="#f7f4ec"/>
            <rect x="247" y="1392" width="34" height="478" fill="url(#edge)"/>
            <g filter="url(#soft)" fill="none" stroke-linecap="round">
              <path d="M350 1408 300 1540 268 1630M353 1645 322 1738M420 1722 384 1820 378 1875M605 1485 574 1580M702 1470 680 1540 650 1615M887 1500 820 1680M1078 1528 1033 1670M1130 1650 1108 1790" stroke="#dcdcd9" stroke-width="18"/>
              <path d="M742 1713Q790 1730 845 1738" stroke="#dededb" stroke-width="16"/>
              <path d="M795 1485 760 1600M715 1690 680 1780 665 1870M250 1805Q400 1820 540 1875" stroke="#faf2de" stroke-width="18"/>
            </g>
          </g>
          <path d="M684 1533 689 1537M677 1550 683 1546M678 1558 682 1556M676 1566 680 1562M676 1576 679 1581M1129 1654 1127 1658M1129 1664 1127 1668M1129 1680 1127 1686M1129 1692 1128 1695M375 1870 379 1872M385 1872 387 1868M598 1874 600 1870M606 1873 608 1874" fill="none" stroke="#6b6b68" stroke-width="3"/>
          <ellipse cx="723" cy="1587" rx="19" ry="9" transform="rotate(-15 723 1587)" fill="#93928c" filter="url(#pinblur)"/>
          <ellipse cx="697.500" cy="1637" rx="5.500" ry="2.600" fill="#4d4d4b"/><path d="M697.500 1575V1636" stroke="#a3a3a3" stroke-width="5"/><path d="M697 1578V1634" stroke="#c8c8c8" stroke-width="1.500"/>
          <circle cx="697.800" cy="1559" r="18" fill="#e84b3a"/><circle cx="691.500" cy="1553.500" r="4.500" fill="#fff"/>
          <g clip-path="url(#frame)"><rect x="676" y="1740" width="454" height="135" fill="url(#shade)"/></g>
        </svg>
        <span class="meta">7:16 AM<svg class="ticks"><use href="#read"/></svg></span>
        <svg class="tail"><use href="#tail"/></svg>
      </div>
    </section>
  </main>

  <nav class="menu">
    <button class="item pressed">Mark as Unread
      <svg viewBox="0 0 60 60"><path d="M35 11.500C16 7 3 16.500 3 28.500 3 36 7.500 41 14 44.500 15 46.500 12.500 50 11 52.500 17 51.500 20.500 48 23.500 46.500 38 48 49.500 40 49.500 26.500" fill="none" stroke="#0b0b0b" stroke-width="3.700"/><circle cx="48" cy="13.500" r="8.700" fill="#3478f6"/></svg></button>
    <button class="item first">Archive
      <svg viewBox="0 0 60 60"><path d="M4.500 11H46.500Q49 11 49 13.500V19.500Q49 22 46.500 22H5.500Q3 22 3 19.500V13.500Q3 11 5.500 11ZM6.500 23V48Q6.500 53.500 12 53.500H40Q45.500 53.500 45.500 48V23M18 31.500H34" fill="none" stroke="#0b0b0b" stroke-width="3.900" stroke-linecap="round"/></svg></button>
    <button class="item">Mute
      <svg viewBox="0 0 60 60"><path d="M5 13 48.500 56M22 23 36 11.500Q37.500 11 37.500 13V38M9.500 27V39.500Q9.500 42 12 42H22L36 54.500" fill="none" stroke="#0b0b0b" stroke-width="3.700" stroke-linecap="round" stroke-linejoin="round"/></svg></button>
    <button class="item danger">Delete Chat
      <svg viewBox="0 0 60 60"><path d="M4 14.500H49M17.500 14V9Q17.500 4.500 22 4.500H31Q35.500 4.500 35.500 9V14M8.500 16 11.500 51.500Q12 55.500 16 55.500H37Q41 55.500 41.500 51.500L44.500 16M18.500 23 19.500 48M26.500 23V48M34.500 23 33.500 48" fill="none" stroke="#ea5040" stroke-width="3.500" stroke-linecap="round"/></svg></button>
  </nav>
  <div class="home"></div>
</div>
</body>
</html>
```
FILE: styles.css
```
* { box-sizing: border-box; }
body { margin: 0; font-family: Inter, "Liberation Sans", sans-serif; }
.defs { position: absolute; }

.screen {
  position: relative;
  display: flex;
  flex-direction: column;
  align-items: flex-start;
  width: 1242px;
  height: 2688px;
  padding: 0 60px;
  overflow: hidden;
  background: linear-gradient(#bab9be 0, #bababd 2340px, #b5b5b8 2440px, #b5b5b8 100%);
}

/* colours of the blurred screen behind the preview */
.glow { position: absolute; border-radius: 50%; filter: blur(27px); }
.glow-edit { left: 82px; top: 226px; width: 90px; height: 56px; background: #8496b8; opacity: .75; }
.glow-compose { left: 1090px; top: 210px; width: 70px; height: 76px; background: #8299b8; opacity: .75; }
.glow-tab1 { left: 110px; top: 2420px; width: 70px; height: 100px; background: #a4a4a6; }
.glow-tab2 { left: 350px; top: 2420px; width: 70px; height: 100px; background: #a6a6a8; }
.glow-tab3 { left: 585px; top: 2420px; width: 80px; height: 100px; background: #a4a4a6; }
.glow-tab4 { left: 810px; top: 2398px; width: 90px; height: 94px; background: #527fbf; }
.glow-tab5 { left: 1058px; top: 2408px; width: 80px; height: 100px; background: #9f9fa1; }

.status {
  position: relative;
  z-index: 1;
  display: flex;
  justify-content: space-between;
  width: 100%;
  height: 300px;
  padding: 0 2px 0 37px;
}
.clock { display: flex; }
.time { font-size: 47px; font-weight: 600; line-height: 136px; letter-spacing: -.2px; }
.locate { margin: 48px 0 0 12px; }
.system { margin-top: 48px; }

.preview {
  position: relative;
  width: 1122px;
  height: 1602px;
  border-radius: 40px;
  box-shadow: 0 0 300px rgba(0, 0, 0, .3);
}
.title {
  height: 120px;
  margin: 0;
  border-bottom: 2px solid #b9b8b4;
  border-radius: 40px 40px 0 0;
  background: linear-gradient(90deg, #f7f7f6, #f5f6f2);
  color: #060606;
  font-size: 44px;
  font-weight: 600;
  line-height: 121px;
  letter-spacing: .2px;
  text-align: center;
}
.chat {
  position: relative;
  display: flex;
  flex-direction: column;
  align-items: flex-start;
  height: 1482px;
  padding: 0 43px 0 44px;
  overflow: hidden;
  border-radius: 0 0 40px 40px;
  background: linear-gradient(165deg, #eae7e0, #ebe6e0 50%, #ebe3dd);
}
.wallpaper {
  position: absolute;
  inset: 0;
  width: 1122px;
  height: 1482px;
  fill: none;
  stroke: #dcd8d1;
  stroke-width: 2.7px;
  stroke-linejoin: round;
  stroke-linecap: round;
}
.wallpaper * { vector-effect: non-scaling-stroke; }
.wallpaper .s { rx: 11px; ry: 14px; }
.wallpaper .m { rx: 16px; ry: 19px; }
.wallpaper .l { rx: 27px; ry: 31px; }
.wallpaper .dot { rx: 8px; ry: 9px; fill: #dcd8d1; stroke: none; }

.message {
  position: relative;
  flex: none;
  display: flex;
  align-items: flex-start;
  height: 96px;
  margin-top: 7px;
  padding: 0 19px;
  border-radius: 20px;
  box-shadow: 0 2px 3px rgba(0, 0, 0, .11);
}
.in { background: linear-gradient(#fdfdfd, #f3f3f3); color: #f7f7f7; }
.out { align-self: flex-end; background: #e1f6ca; color: #e1f6ca; }
.message.after-none { margin-top: -44px; }
.message.group { margin-top: 34px; }
.in.group.w-bet { margin-top: 35px; }
.w-thanks { width: 612px; padding-left: 20px; }
.w-bet { width: 379px; }
.w-seat { width: 500px; }
.w-flight { width: 846px; }
.w-morning { width: 579px; }
.w-hi { width: 265px; }

.text { margin: 0; color: #060606; font-size: 44px; line-height: 80px; letter-spacing: -.15px; white-space: pre; }
.w-thanks .text { letter-spacing: -.35px; }
.w-seat .text { letter-spacing: .05px; }
.emoji { margin-left: 2px; color: #000; font: 45px/80px "Noto Color Emoji", sans-serif; }
.emoji.spaced { margin-left: 15px; }
.meta {
  display: flex;
  margin: 46px 0 0 auto;
  color: #bcbcbc;
  font-size: 31px;
  line-height: 30px;
  letter-spacing: .8px;
  font-variant-numeric: tabular-nums;
  white-space: pre;
}
.out .meta { color: #b1c1a0; }
.ticks { width: 41px; height: 28px; margin: 1px 0 0 8px; }
.starred { width: 27px; height: 28px; margin: 0 9px 0 0; }
.tail { position: absolute; right: -24px; bottom: 14px; width: 34px; height: 54px; }
.in .tail { right: auto; left: -24px; transform: scaleX(-1); }

.deleted { width: 851px; height: 90px; margin-top: 26px; padding: 0 69px 0 15px; }
.deleted .text { margin-left: 10px; color: #747f69; font-size: 39px; font-style: italic; line-height: 73px; letter-spacing: 0; }
.deleted .meta { margin-top: 41px; }
.ban { width: 36px; height: 36px; margin-top: 19px; fill: none; stroke: #899a7c; stroke-width: 4.2; }

.day {
  position: relative;
  flex: none;
  align-self: center;
  width: 270px;
  height: 59px;
  margin-top: 25px;
  border-radius: 20px;
  background: #dddde8;
  box-shadow: 0 2px 1px rgba(80, 60, 50, .22);
  color: #49494d;
  font-size: 34px;
  font-weight: 600;
  line-height: 57px;
  letter-spacing: .3px;
  text-align: center;
}

.location { width: 886px; height: 504px; margin-top: 26px; padding: 7px 9px 9px 7px; }
.map { flex: none; width: 870px; height: 489px; overflow: visible; }
.casing { fill: none; stroke: #d5d2cb; stroke-width: 12px; }
.road { fill: none; stroke: #fff; stroke-width: 8.5px; }
.location .meta { position: absolute; right: 19px; bottom: 19px; margin: 0; color: #fff; }

.menu {
  position: relative;
  display: flex;
  flex-direction: column;
  width: 750px;
  margin-top: 61px;
  overflow: hidden;
  border-radius: 40px;
  background: linear-gradient(120deg, #ebebeb, #ececee);
}
.item {
  display: flex;
  justify-content: space-between;
  height: 133px;
  padding: 1px 50px 0 48px;
  border: 0;
  border-bottom: 2px solid #b0b0b3;
  background: none;
  color: #0a0a0a;
  font: 400 48px/132px Inter, "Liberation Sans", sans-serif;
  letter-spacing: .15px;
}
.item svg { width: 60px; height: 60px; margin-top: 35px; }
.first { height: 134px; }
.pressed { height: 132px; border-bottom: 0; background: #d8d8d8; }
.danger { height: 132px; border-bottom: 0; color: #ea5545; letter-spacing: .45px; }

.home { align-self: center; width: 444px; height: 15px; margin-top: 155px; border-radius: 8px; background: #1a1a1a; }
```
